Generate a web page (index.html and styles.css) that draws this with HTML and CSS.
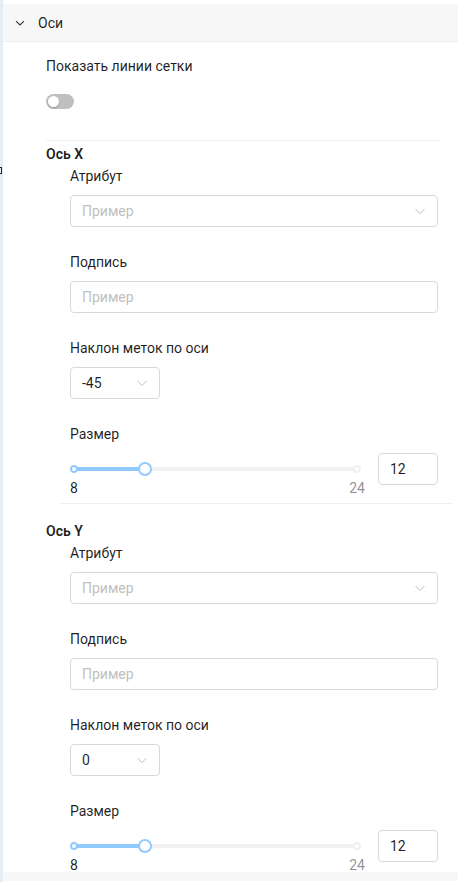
FILE: index.html
```html
<!DOCTYPE html>
<html lang="ru">
  <head>
    <meta charset="UTF-8" />
    <meta name="viewport" content="width=device-width, initial-scale=1.0" />
    <title>Оси</title>
    <link rel="stylesheet" href="styles.css">
  </head>
  <body>
    <div class="page">
      <div class="edge-mark"></div>

      <div class="panel">
        <div class="panel-header">
          <svg class="header-arrow" width="10" height="10" viewBox="0 0 10 10">
            <path d="M1 3.2 L5 7 L9 3.2" fill="none" stroke="#333" stroke-width="1.1" />
          </svg>
          <span>Оси</span>
        </div>

        <div class="panel-body">
          <div class="field">
            <div class="label">Показать линии сетки</div>
            <div class="control">
              <span class="switch"><span class="knob"></span></span>
            </div>
          </div>

          <div class="divider"></div>

          <section class="axis">
            <div class="axis-title">Ось X</div>
            <div class="axis-fields">
              <div class="field">
                <div class="label">Атрибут</div>
                <div class="control">
                  <div class="select wide">
                    <span class="placeholder">Пример</span>
                    <svg class="arrow" width="12" height="12" viewBox="0 0 12 12">
                      <path d="M1.5 4 L6 8.5 L10.5 4" fill="none" stroke="#bfbfbf" stroke-width="1" />
                    </svg>
                  </div>
                </div>
              </div>
              <div class="field">
                <div class="label">Подпись</div>
                <div class="control">
                  <div class="input"><span class="placeholder">Пример</span></div>
                </div>
              </div>
              <div class="field">
                <div class="label">Наклон меток по оси</div>
                <div class="control">
                  <div class="select small">
                    <span>-45</span>
                    <svg class="arrow" width="12" height="12" viewBox="0 0 12 12">
                      <path d="M1.5 4 L6 8.5 L10.5 4" fill="none" stroke="#bfbfbf" stroke-width="1" />
                    </svg>
                  </div>
                </div>
              </div>
              <div class="field last">
                <div class="label">Размер</div>
                <div class="control size-row">
                  <div class="slider">
                    <div class="rail"></div>
                    <div class="track" style="width: 25%"></div>
                    <span class="dot on" style="left: 0%"></span>
                    <span class="dot" style="left: 100%"></span>
                    <span class="handle" style="left: 25%"></span>
                    <span class="mark on" style="left: 0%">8</span>
                    <span class="mark" style="left: 100%">24</span>
                  </div>
                  <div class="input number">12</div>
                </div>
              </div>
            </div>
          </section>

          <div class="divider divider-second"></div>

          <section class="axis">
            <div class="axis-title">Ось Y</div>
            <div class="axis-fields">
              <div class="field">
                <div class="label">Атрибут</div>
                <div class="control">
                  <div class="select wide">
                    <span class="placeholder">Пример</span>
                    <svg class="arrow" width="12" height="12" viewBox="0 0 12 12">
                      <path d="M1.5 4 L6 8.5 L10.5 4" fill="none" stroke="#bfbfbf" stroke-width="1" />
                    </svg>
                  </div>
                </div>
              </div>
              <div class="field">
                <div class="label">Подпись</div>
                <div class="control">
                  <div class="input"><span class="placeholder">Пример</span></div>
                </div>
              </div>
              <div class="field">
                <div class="label">Наклон меток по оси</div>
                <div class="control">
                  <div class="select small">
                    <span>0</span>
                    <svg class="arrow" width="12" height="12" viewBox="0 0 12 12">
                      <path d="M1.5 4 L6 8.5 L10.5 4" fill="none" stroke="#bfbfbf" stroke-width="1" />
                    </svg>
                  </div>
                </div>
              </div>
              <div class="field last">
                <div class="label">Размер</div>
                <div class="control size-row">
                  <div class="slider">
                    <div class="rail"></div>
                    <div class="track" style="width: 25%"></div>
                    <span class="dot on" style="left: 0%"></span>
                    <span class="dot" style="left: 100%"></span>
                    <span class="handle" style="left: 25%"></span>
                    <span class="mark on" style="left: 0%">8</span>
                    <span class="mark" style="left: 100%">24</span>
                  </div>
                  <div class="input number">12</div>
                </div>
              </div>
            </div>
          </section>
        </div>

        <div class="panel-next"></div>
      </div>
    </div>
  </body>
</html>
```

FILE: styles.css
```css
body {
  margin: 0;
  background: #fff;
  font-family: Roboto, "Noto Sans", Arial, sans-serif;
  font-size: 14px;
  color: rgba(0, 0, 0, 0.88);
}

.page {
  position: relative;
  width: 458px;
  min-height: 882px;
  border-left: 3px solid #e6edf4;
  padding-top: 4px;
  box-sizing: border-box;
}

.edge-mark {
  position: absolute;
  left: -6px;
  top: 167px;
  width: 3px;
  height: 5px;
  border: 1px solid #222;
}

.panel-header {
  display: flex;
  align-items: center;
  height: 37px;
  background: #f7f7f7;
  border-bottom: 1px solid #ededed;
  padding-left: 12px;
  line-height: 22px;
}

.header-arrow {
  margin-right: 13px;
}

.panel-body {
  padding: 13px 18px 0 43px;
}

.field {
  margin-bottom: 24px;
}

.field.last {
  margin-bottom: 0;
}

.label {
  line-height: 22px;
  padding-bottom: 8px;
}

.control {
  display: flex;
  align-items: center;
  min-height: 32px;
}

.switch {
  position: relative;
  display: inline-block;
  width: 28px;
  height: 15px;
  border-radius: 8px;
  background: #bfbfbf;
}

.knob {
  position: absolute;
  top: 2px;
  left: 2px;
  width: 11px;
  height: 11px;
  border-radius: 50%;
  background: #fff;
  box-shadow: 0 1px 2px rgba(0, 0, 0, 0.2);
}

.divider {
  height: 1px;
  background: #f0f0f0;
  margin-top: -1px;
}

.divider-second {
  margin: 18px -13px 16px 14px;
}

.axis-title {
  font-weight: 600;
  line-height: 22px;
  margin-top: 2px;
}

.axis-fields {
  padding-left: 24px;
  margin-right: 2px;
}

.select,
.input {
  display: flex;
  align-items: center;
  height: 32px;
  padding: 0 11px;
  border: 1px solid #d9d9d9;
  border-radius: 4px;
  box-sizing: border-box;
  background: #fff;
}

.select.wide,
.input {
  width: 100%;
}

.select.small {
  width: 90px;
}

.select .arrow {
  margin-left: auto;
}

.placeholder {
  color: #bfbfbf;
}

.slider {
  position: relative;
  flex: 1;
  height: 32px;
  margin: 0 21px 0 4px;
}

.rail,
.track {
  position: absolute;
  top: 14px;
  left: 0;
  height: 4px;
  border-radius: 2px;
}

.rail {
  right: 0;
  background: #f2f2f2;
}

.track {
  background: #91caff;
}

.dot,
.handle {
  position: absolute;
  top: 16px;
  border-radius: 50%;
  background: #fff;
  box-sizing: border-box;
  transform: translate(-50%, -50%);
}

.dot {
  width: 8px;
  height: 8px;
  border: 2px solid #f0f0f0;
}

.dot.on {
  border-color: #91caff;
}

.handle {
  width: 14px;
  height: 14px;
  border: 2px solid #91caff;
}

.mark {
  position: absolute;
  top: 24px;
  line-height: 22px;
  transform: translateX(-50%);
  color: rgba(0, 0, 0, 0.45);
}

.mark.on {
  color: rgba(0, 0, 0, 0.88);
}

.input.number {
  width: 60px;
  flex: none;
}

.panel-next {
  height: 9px;
  margin-top: 10px;
  background: #f7f7f7;
}
```
